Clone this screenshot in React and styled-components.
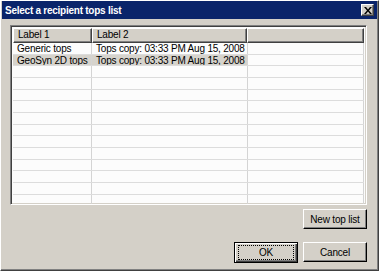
import styled, { createGlobalStyle } from 'styled-components';

const GlobalStyle = createGlobalStyle`
  html, body {
    margin: 0;
    padding: 0;
    background: #d4d0c8;
  }
  body {
    font-family: "Liberation Sans", Arial, sans-serif;
    font-size: 10px;
    letter-spacing: -0.2px;
    color: #000;
  }
`;

const Window = styled.div`
  width: 379px;
  height: 271px;
  box-sizing: border-box;
  background: #d4d0c8;
  border-top: 1px solid #ffffff;
  border-left: 1px solid #ffffff;
  border-right: 1px solid #404040;
  border-bottom: 1px solid #404040;
  box-shadow: inset -1px -1px 0 #808080, inset 1px 1px 0 #d4d0c8;
  display: flex;
  flex-direction: column;
`;

const TitleBar = styled.div`
  height: 18px;
  margin: 0 1px;
  background: #0a246a;
  display: flex;
  align-items: center;
  justify-content: space-between;
  padding: 0 3px 0 3px;
  color: #fff;
  font-weight: bold;
  font-size: 10px;
  letter-spacing: -0.25px;
`;

const CloseButton = styled.div`
  width: 13px;
  height: 12px;
  box-sizing: border-box;
  background: #d4d0c8;
  border-top: 1px solid #fff;
  border-left: 1px solid #fff;
  border-right: 1px solid #404040;
  border-bottom: 1px solid #404040;
  box-shadow: inset -1px -1px 0 #808080;
  display: flex;
  align-items: center;
  justify-content: center;
`;

const Content = styled.div`
  flex: 1;
  display: flex;
  flex-direction: column;
  padding: 6px 11px 0 9px;
`;

const ListFrame = styled.div`
  height: 180px;
  box-sizing: border-box;
  border-top: 1px solid #808080;
  border-left: 1px solid #808080;
  border-right: 1px solid #ffffff;
  border-bottom: 1px solid #ffffff;
  box-shadow: inset 1px 1px 0 #404040, inset -1px -1px 0 #d4d0c8;
  padding: 2px;
  background: #fcfcfc;
  overflow: hidden;
  display: flex;
  flex-direction: column;
`;

const HeaderRow = styled.div`
  display: flex;
  height: 15px;
  flex-shrink: 0;
`;

const HeaderCell = styled.div`
  width: ${(p) => (p.$w ? `${p.$w}px` : 'auto')};
  flex: ${(p) => (p.$w ? 'none' : '1')};
  box-sizing: border-box;
  background: #d4d0c8;
  border-top: 1px solid #fff;
  border-left: 1px solid #fff;
  border-right: 1px solid #404040;
  border-bottom: 1px solid #404040;
  box-shadow: inset -1px -1px 0 #808080;
  padding-left: 4px;
  line-height: 12px;
  white-space: nowrap;
`;

const Row = styled.div`
  display: flex;
  height: 11.67px;
  flex-shrink: 0;
  box-sizing: border-box;
  border-bottom: 1px solid #dcdcdc;
`;

const Cell = styled.div`
  width: ${(p) => (p.$w ? `${p.$w}px` : 'auto')};
  flex: ${(p) => (p.$w ? 'none' : '1')};
  box-sizing: border-box;
  border-right: 1px solid #d4d4d4;
  padding-left: ${(p) => (p.$w ? 4 : 0)}px;
  background: ${(p) => (p.$selected ? '#d6d3cc' : 'transparent')};
  line-height: 11px;
  white-space: nowrap;
  overflow: hidden;
`;

const ButtonRow = styled.div`
  display: flex;
  justify-content: flex-end;
  gap: 5px;
  margin-top: ${(p) => p.$top}px;
`;

const Button = styled.button`
  width: 64px;
  height: ${(p) => (p.$default ? 21 : 20)}px;
  box-sizing: border-box;
  margin: 0;
  padding: 0;
  font-family: "Liberation Sans", Arial, sans-serif;
  font-size: 10px;
  letter-spacing: -0.2px;
  color: #000;
  background: #d4d0c8;
  border-top: 1px solid ${(p) => (p.$default ? '#000' : '#fff')};
  border-left: 1px solid ${(p) => (p.$default ? '#000' : '#fff')};
  border-right: 1px solid #000;
  border-bottom: 1px solid #000;
  box-shadow: ${(p) =>
    p.$default
      ? 'inset 1px 1px 0 #fff, inset -1px -1px 0 #404040, inset -2px -2px 0 #808080'
      : 'inset -1px -1px 0 #808080'};
  display: flex;
  align-items: center;
  justify-content: center;
`;

const Focus = styled.span`
  display: flex;
  align-items: center;
  justify-content: center;
  width: 54px;
  height: 13px;
  outline: 1px dotted #000;
`;

const rows = [
  ['Generic tops', 'Tops copy: 03:33 PM Aug 15, 2008'],
  ['GeoSyn 2D tops', 'Tops copy: 03:33 PM Aug 15, 2008'],
];

export default function App() {
  const filled = [...rows];
  while (filled.length < 14) filled.push(['', '']);
  return (
    <>
      <GlobalStyle />
      <Window>
        <TitleBar>
          <span>Select a recipient tops list</span>
          <CloseButton>
            <svg width="8" height="7" viewBox="0 0 8 7">
              <path d="M0 0h2l2 2.5L6 0h2L5 3.5 8 7H6L4 4.5 2 7H0l3-3.5z" fill="#000" />
            </svg>
          </CloseButton>
        </TitleBar>
        <Content>
          <ListFrame>
            <HeaderRow>
              <HeaderCell $w={79}>Label 1</HeaderCell>
              <HeaderCell $w={155}>Label 2</HeaderCell>
              <HeaderCell />
            </HeaderRow>
            {filled.map((r, i) => (
              <Row key={i}>
                <Cell $w={79} $selected={i === 1}>{r[0]}</Cell>
                <Cell $w={156} $selected={i === 1}>{r[1]}</Cell>
                <Cell />
              </Row>
            ))}
          </ListFrame>
          <ButtonRow $top={4}>
            <Button>New top list</Button>
          </ButtonRow>
          <ButtonRow $top={13}>
            <Button $default>
              <Focus>OK</Focus>
            </Button>
            <Button>Cancel</Button>
          </ButtonRow>
        </Content>
      </Window>
    </>
  );
}
